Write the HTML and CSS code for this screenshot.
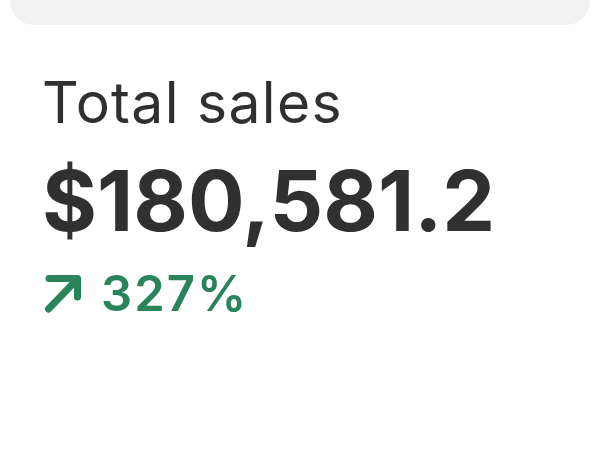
FILE: index.html
```html
<!DOCTYPE html>
<html>
<head>
<meta charset="utf-8">
<link rel="stylesheet" href="styles.css">
</head>
<body>
<div class="topbar"></div>
<div class="metric">
  <div class="label">Total sales</div>
  <div class="value">$180,581.2</div>
  <div class="trend">
    <svg class="arrow" width="42" height="40" viewBox="0 0 42 40">
      <path d="M6.5 35 L35.5 5 M7 4.5 H35.5 V23" fill="none" stroke="#29845a" stroke-width="7" stroke-linecap="round" stroke-linejoin="round"/>
    </svg>
    <span class="pct">327%</span>
  </div>
</div>
</body>
</html>
```
FILE: styles.css
```css
html, body {
  margin: 0;
  padding: 0;
  background: #ffffff;
}
body {
  font-family: Inter, "Noto Sans", sans-serif;
  color: #303030;
}
.topbar {
  margin: 0 10px;
  height: 25px;
  background: #f1f1f1;
  border-radius: 0 0 24px 24px;
}
.metric {
  padding: 44px 0 0 42px;
  display: flex;
  flex-direction: column;
}
.label {
  font-size: 57px;
  font-weight: 400;
  line-height: 68px;
  letter-spacing: 1.3px;
}
.value {
  margin-top: 14px;
  font-size: 84px;
  font-weight: 700;
  line-height: 100px;
}
.trend {
  margin-top: 14px;
  display: flex;
  align-items: center;
  gap: 17px;
  color: #29845a;
}
.arrow {
  display: block;
}
.pct {
  font-size: 49px;
  font-weight: 600;
  line-height: 58px;
  letter-spacing: 2px;
}
```
